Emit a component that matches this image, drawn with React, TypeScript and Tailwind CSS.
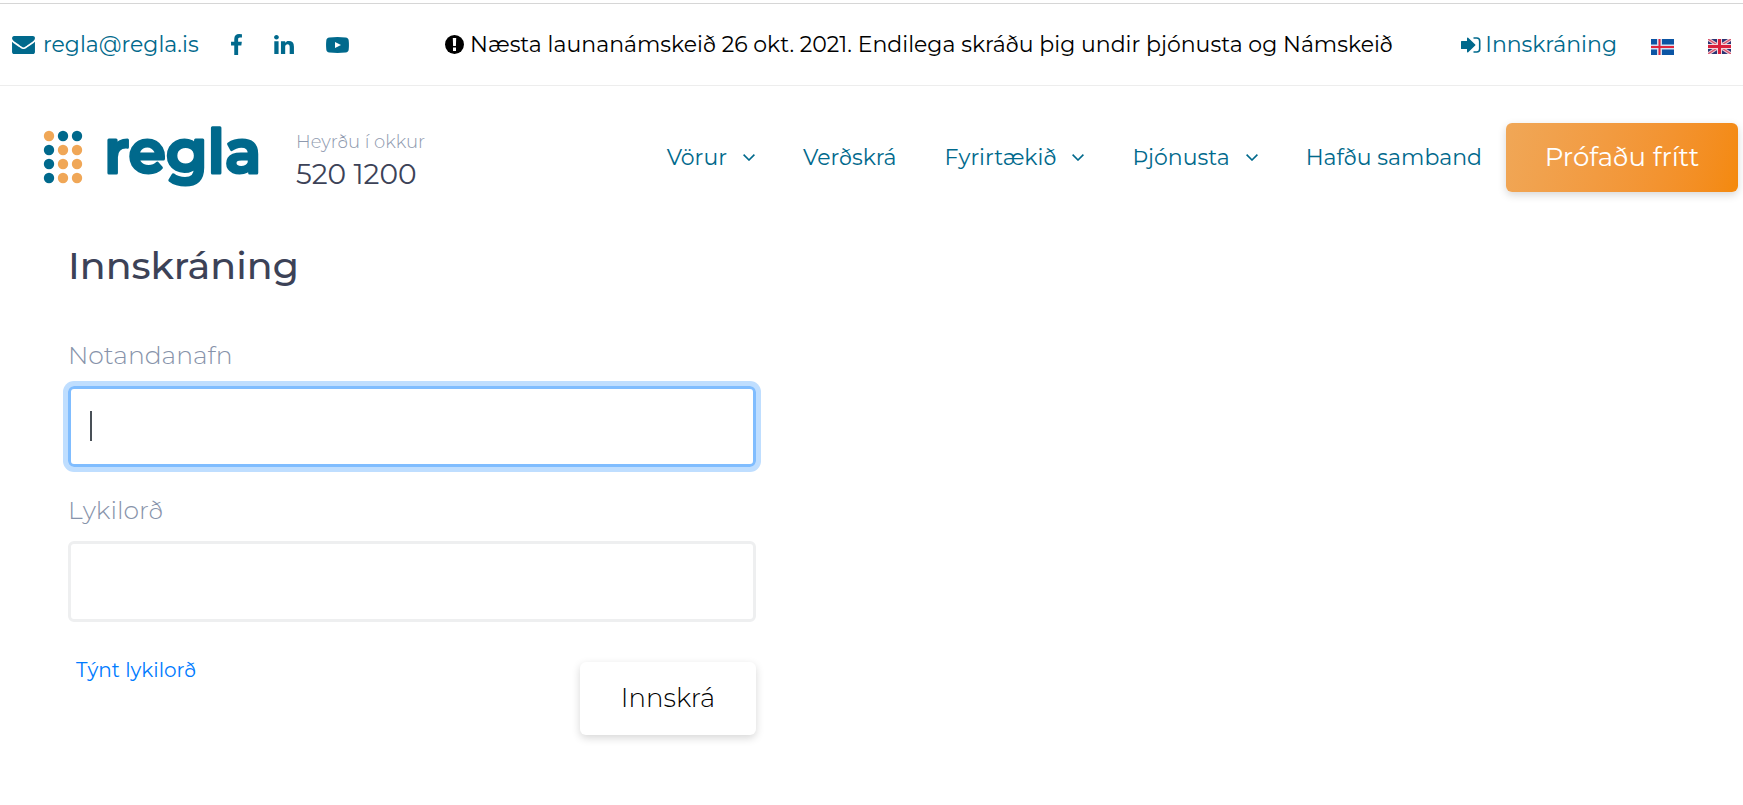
const BRAND_FONT = "font-['Montserrat','Inter',sans-serif]";

const logoDots = ["o", "t", "t", "t", "o", "o", "t", "o", "o", "t", "o", "o"];

const navItems = [
  { label: "Vörur", hasMenu: true },
  { label: "Verðskrá", hasMenu: false },
  { label: "Fyrirtækið", hasMenu: true },
  { label: "Þjónusta", hasMenu: true },
  { label: "Hafðu samband", hasMenu: false },
];

function EnvelopeIcon() {
  return (
    <svg viewBox="0 0 1792 1408" className="h-[18px] w-[23px] shrink-0" fill="currentColor" aria-hidden>
      <path d="M1792 454v794q0 66-47 113t-113 47H160q-66 0-113-47T0 1248V454q44 49 101 87 362 246 497 345 57 42 92.500 65.500t94.500 48 110 24.500h2q51 0 110-24.500t94.500-48T1194 886q170-123 498-345 57-39 100-87zm0-294q0 79-49 151t-122 123q-376 261-468 325-10 7-42.500 30.500t-54 38-52 32.500-57.500 27-50 9h-2q-23 0-50-9t-57.500-27-52-32.500-54-38T639 759q-91-64-262-182.500T172 434q-62-42-117-115.500T0 182q0-78 41.500-130T160 0h1472q65 0 112.500 47t47.500 113z" />
    </svg>
  );
}

function FacebookIcon() {
  return (
    <svg viewBox="95 -1536 864 1664" className="h-[21px] w-[11px]" fill="currentColor" aria-hidden>
      <path d="M959-1524v264H802q-86 0-116 36t-30 108v189h293l-39 296H656V128H350V-631H95v-296h255v-218q0-186 104-288.500T731-1536q147 0 228 12z" />
    </svg>
  );
}

function LinkedinIcon() {
  return (
    <svg viewBox="0 0 1536 1468" className="h-[19px] w-5" fill="currentColor" aria-hidden>
      <path d="M349 477v991H19V477h330zm21-306q1 73-50.500 122T184 342h-2q-82 0-132-49T0 171Q0 97 51.500 48.500T186 0t133 48.500T370 171zm1166 729v568h-329V938q0-105-40.500-164.500T1040 714q-63 0-105.500 34.500T871 834q-11 30-11 81v553H531q2-399 2-647t-1-296l-1-48h329v144h-2q20-32 41-56t56.500-52 87-43.500T1157 454q171 0 275 113.500T1536 900z" />
    </svg>
  );
}

function YoutubeIcon() {
  return (
    <svg viewBox="0 0 23 16" className="h-4 w-[23px]" fill="currentColor" aria-hidden>
      <path
        fillRule="evenodd"
        d="M3.500.4Q11.500-.3 19.500.4C21.700.6 22.500 1.700 22.700 3.400Q23.200 8 22.700 12.600C22.500 14.300 21.700 15.400 19.500 15.600Q11.500 16.300 3.500 15.600C1.300 15.400.5 14.300.3 12.600Q-.2 8 .3 3.400C.5 1.700 1.300.6 3.500.4ZM9 4.900V11L15 8Z"
      />
    </svg>
  );
}

function AlertIcon() {
  return (
    <svg viewBox="0 0 19 19" className="size-[19px] shrink-0" aria-hidden>
      <circle cx="9.500" cy="9.500" r="9.500" />
      <path d="M7.800 3h3.400l-.3 8H8.100zM8 12.600h3V16H8z" fill="#fff" />
    </svg>
  );
}

function SignInIcon() {
  return (
    <svg viewBox="0 0 20 16" className="h-4 w-5 shrink-0" aria-hidden>
      <path d="M0 4.600Q0 4 .6 4H6V1.200Q6.200.2 7.200.8L14.200 7.400Q14.800 8 14.200 8.600L7.200 15.200Q6.200 15.800 6 14.800V12H.6Q0 12 0 11.400Z" fill="currentColor" />
      <path d="M12.500 1h3.200a3 3 0 0 1 3 3v8a3 3 0 0 1-3 3h-3.200" fill="none" stroke="currentColor" strokeWidth="1.600" />
    </svg>
  );
}

function ChevronIcon() {
  return (
    <svg viewBox="0 0 12 7" className="h-[7px] w-3" fill="none" stroke="currentColor" strokeWidth="1.600" aria-hidden>
      <path d="M.6.6l5.400 5.400L11.400.6" />
    </svg>
  );
}

function IcelandFlag() {
  return (
    <svg viewBox="0 0 23 16" className="h-4 w-[23px]" aria-hidden>
      <path fill="#0b55a4" d="M0 0h23v16H0z" />
      <path fill="#d5dff0" d="M6 0h5v16H6zM0 5.500h23v5H0z" />
      <path fill="#e0263c" d="M7.500 0h2v16h-2zM0 7h23v2H0z" />
    </svg>
  );
}

function BritainFlag() {
  return (
    <svg viewBox="0 0 23 15" className="h-[15px] w-[23px]" aria-hidden>
      <path fill="#2a3574" d="M0 0h23v15H0z" />
      <path stroke="#ecc9d2" strokeWidth="3.400" d="M0 0l23 15M23 0L0 15" />
      <path stroke="#d8506a" strokeWidth="1.200" d="M0 0l23 15M23 0L0 15" />
      <path fill="#f3d5dc" d="M9 0h5v15H9zM0 5h23v5H0z" />
      <path fill="#d9203c" d="M10 0h3v15h-3zM0 6h23v3H0z" />
    </svg>
  );
}

function Logo() {
  return (
    <svg viewBox="0 -12 224 90" className="-my-3 h-[90px] w-56 overflow-visible" role="img" aria-label="regla">
      {logoDots.map((tone, i) => (
        <circle
          key={i}
          cx={5 + (i % 3) * 14}
          cy={11 + Math.floor(i / 3) * 14}
          r="5.200"
          fill={tone === "o" ? "#f0a757" : "#00698c"}
        />
      ))}
      <text
        x="60"
        y="48"
        fill="#00698c"
        stroke="#00698c"
        strokeWidth="3"
        strokeLinejoin="round"
        className="font-['Montserrat','Inter',sans-serif] text-[60px] font-semibold"
      >
        regla
      </text>
    </svg>
  );
}

function TopBar() {
  return (
    <div className="flex h-[82px] items-center justify-between border-b border-[#ededed] px-3 text-[22px] text-[#00698c]">
      <div className="flex items-center">
        <a href="mailto:regla@regla.is" className="flex items-center gap-2">
          <EnvelopeIcon />
          regla@regla.is
        </a>
        <div className="ml-8 flex items-center gap-8">
          <a href="#facebook" aria-label="Facebook"><FacebookIcon /></a>
          <a href="#linkedin" aria-label="LinkedIn"><LinkedinIcon /></a>
          <a href="#youtube" aria-label="YouTube"><YoutubeIcon /></a>
        </div>
      </div>
      <p className="flex items-center gap-1.5 pl-7 text-black">
        <AlertIcon />
        Næsta launanámskeið 26 okt. 2021. Endilega skráðu þig undir þjónusta og Námskeið
      </p>
      <div className="flex items-center gap-[34px]">
        <a href="#login" className="flex items-center gap-1">
          <SignInIcon />
          Innskráning
        </a>
        <a href="#is" aria-label="Íslenska" className="pt-1"><IcelandFlag /></a>
        <a href="#en" aria-label="English" className="pt-1"><BritainFlag /></a>
      </div>
    </div>
  );
}

function Header() {
  return (
    <header className="flex items-center pt-[37px] pr-[5px] pl-11">
      <Logo />
      <div className="ml-7 flex flex-col gap-1 pt-1">
        <p className="text-[18px] leading-6 font-light text-[#8e99ae]">Heyrðu í okkur</p>
        <p className="text-[28px] leading-8 text-[#3c4257]">520 1200</p>
      </div>
      <nav className="ml-auto flex items-center gap-12 text-[22px] text-[#00698c]">
        {navItems.map((item) => (
          <a key={item.label} href="#" className="flex items-center gap-4">
            {item.label}
            {item.hasMenu && <ChevronIcon />}
          </a>
        ))}
      </nav>
      <button
        type="button"
        className="ml-6 h-[69px] w-[232px] rounded-md bg-linear-105 from-[#f0a757] to-[#f4890b] text-[26px] text-white shadow-[0_3px_9px_rgba(0,0,0,0.16)]"
      >
        Prófaðu frítt
      </button>
    </header>
  );
}

type FieldProps = {
  id: string;
  type: string;
  label: string;
  focused?: boolean;
};

function Field({ id, type, label, focused = false }: FieldProps) {
  return (
    <div className="flex flex-col gap-3">
      <label htmlFor={id} className="text-[25px] leading-[38px] font-light text-[#8793aa]">
        {label}
      </label>
      <div className="relative">
        <input
          id={id}
          type={type}
          autoFocus={focused}
          className="block h-[81px] w-full rounded-md border-3 border-[#eeeff0] px-5 text-[25px] text-[#495057] caret-transparent outline-none focus:border-[#80bdff] focus:ring-5 focus:ring-[#bfdeff]"
        />
        {/* steady caret in place of the blinking one */}
        {focused && <span className="absolute top-[25px] left-[22px] h-[30px] w-0.5 bg-[#495057]" aria-hidden />}
      </div>
    </div>
  );
}

export default function App() {
  return (
    <div className={`${BRAND_FONT} min-h-screen bg-white pt-[3px]`}>
      <div className="border-t border-[#d6d6d6]" />
      <TopBar />
      <Header />
      <main className="mt-12 w-[756px] pl-[68px]">
        <h1 className="text-[38px] leading-[52px] font-medium text-[#3c4257]">Innskráning</h1>
        <form className="mt-11">
          <div className="flex flex-col gap-6">
            <Field id="username" type="text" label="Notandanafn" focused />
            <Field id="password" type="password" label="Lykilorð" />
          </div>
          <div className="mt-8 flex items-start justify-between">
            <a href="#reset" className="pl-2 text-[20px] leading-8 text-[#007bff]">
              Týnt lykilorð
            </a>
            <button
              type="submit"
              className="mt-2 h-[73px] w-44 rounded-md bg-white text-[26px] font-light text-black shadow-[0_3px_9px_rgba(0,0,0,0.16)]"
            >
              Innskrá
            </button>
          </div>
        </form>
      </main>
    </div>
  );
}
